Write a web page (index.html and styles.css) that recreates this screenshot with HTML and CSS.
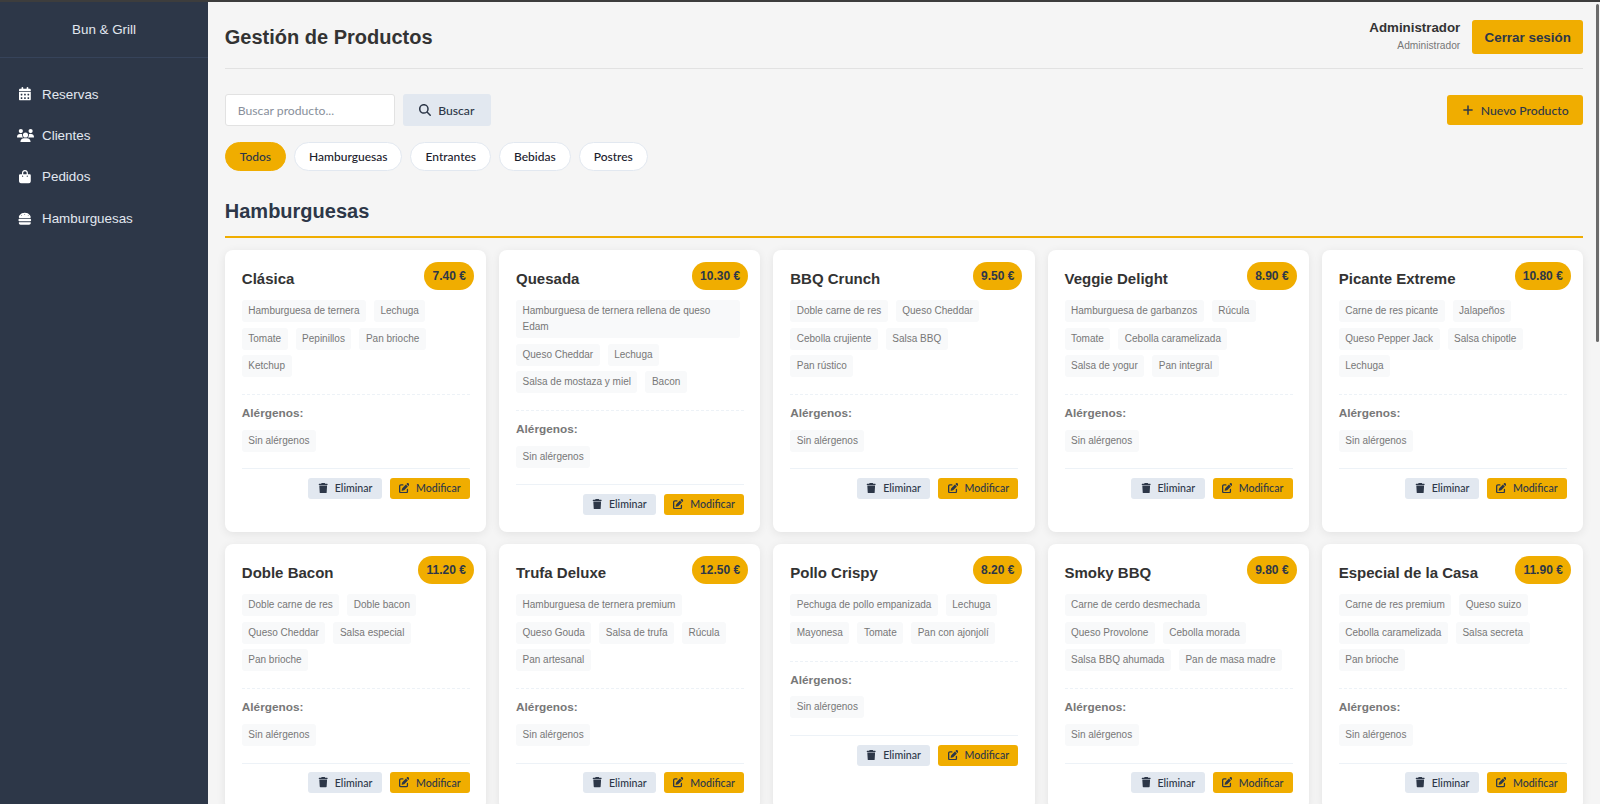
FILE: index.html
```html
<!DOCTYPE html>
<html lang="es">
<head>
    <meta charset="UTF-8">
    <title>Gestión de Productos</title>
    <link rel="stylesheet" href="styles.css">
</head>
<body>

<svg class="icon-defs" aria-hidden="true">
    <symbol id="i-calendar" viewBox="0 0 448 512"><path d="M128 0c17.7 0 32 14.3 32 32V64H288V32c0-17.7 14.3-32 32-32s32 14.3 32 32V64h48c26.5 0 48 21.5 48 48v48H0V112C0 85.5 21.5 64 48 64H96V32c0-17.7 14.3-32 32-32zM0 192H448V464c0 26.5-21.5 48-48 48H48c-26.5 0-48-21.5-48-48V192zm64 80v32c0 8.8 7.2 16 16 16h32c8.8 0 16-7.2 16-16V272c0-8.8-7.2-16-16-16H80c-8.8 0-16 7.2-16 16zm128 0v32c0 8.8 7.2 16 16 16h32c8.8 0 16-7.2 16-16V272c0-8.8-7.2-16-16-16H208c-8.8 0-16 7.2-16 16zm144-16c-8.8 0-16 7.2-16 16v32c0 8.8 7.2 16 16 16h32c8.8 0 16-7.2 16-16V272c0-8.8-7.2-16-16-16H336zM64 400v32c0 8.8 7.2 16 16 16h32c8.8 0 16-7.2 16-16V400c0-8.8-7.2-16-16-16H80c-8.8 0-16 7.2-16 16zm144-16c-8.8 0-16 7.2-16 16v32c0 8.8 7.2 16 16 16h32c8.8 0 16-7.2 16-16V400c0-8.8-7.2-16-16-16H208zm112 16v32c0 8.8 7.2 16 16 16h32c8.8 0 16-7.2 16-16V400c0-8.8-7.2-16-16-16H336c-8.8 0-16 7.2-16 16z"/></symbol>
    <symbol id="i-users" viewBox="0 0 640 512"><path d="M144 0a80 80 0 1 1 0 160A80 80 0 1 1 144 0zM512 0a80 80 0 1 1 0 160A80 80 0 1 1 512 0zM0 298.7C0 239.8 47.8 192 106.7 192h42.7c15.9 0 31 3.5 44.6 9.7c-1.3 7.2-1.9 14.7-1.9 22.3c0 38.2 16.8 72.5 43.3 96c-.2 0-.4 0-.7 0H21.3C9.6 320 0 310.4 0 298.7zM405.3 320c-.2 0-.4 0-.7 0c26.6-23.5 43.3-57.8 43.3-96c0-7.6-.7-15-1.9-22.3c13.6-6.3 28.7-9.7 44.6-9.7h42.7C592.2 192 640 239.8 640 298.7c0 11.8-9.6 21.3-21.3 21.3H405.3zM224 224a96 96 0 1 1 192 0 96 96 0 1 1 -192 0zM128 485.3C128 411.7 187.7 352 261.3 352H378.7C452.3 352 512 411.7 512 485.3c0 14.7-11.9 26.7-26.7 26.7H154.7c-14.7 0-26.7-11.9-26.7-26.7z"/></symbol>
    <symbol id="i-bag" viewBox="0 0 448 512"><path d="M160 112c0-35.3 28.7-64 64-64s64 28.7 64 64v48H160V112zm-48 48H48c-26.5 0-48 21.5-48 48V416c0 53 43 96 96 96H352c53 0 96-43 96-96V208c0-26.5-21.5-48-48-48H336V112C336 50.1 285.9 0 224 0S112 50.1 112 112v48zm24 48a24 24 0 1 1 0 48 24 24 0 1 1 0-48zm152 24a24 24 0 1 1 48 0 24 24 0 1 1 -48 0z"/></symbol>
    <symbol id="i-burger" viewBox="0 0 512 512"><path d="M61.1 224C45 224 32 211 32 194.9c0-1.9 .2-3.7 .6-5.6C37.9 168.3 78.8 32 256 32s218.1 136.3 223.4 157.3c.5 1.9 .6 3.7 .6 5.6c0 16.1-13 29.1-29.1 29.1H61.1zM144 128a16 16 0 1 0 -32 0 16 16 0 1 0 32 0zm240 16a16 16 0 1 0 0-32 16 16 0 1 0 0 32zM272 96a16 16 0 1 0 -32 0 16 16 0 1 0 32 0zM16 304c0-26.5 21.5-48 48-48H448c26.5 0 48 21.5 48 48s-21.5 48-48 48H64c-26.5 0-48-21.5-48-48zm16 96c0-8.8 7.2-16 16-16H464c8.8 0 16 7.2 16 16v16c0 35.3-28.7 64-64 64H96c-35.3 0-64-28.7-64-64V400z"/></symbol>
    <symbol id="i-search" viewBox="0 0 512 512"><path d="M416 208c0 45.9-14.9 88.3-40 122.7L502.6 457.4c12.5 12.5 12.5 32.8 0 45.3s-32.8 12.5-45.3 0L330.7 376c-34.4 25.2-76.8 40-122.7 40C93.1 416 0 322.9 0 208S93.1 0 208 0S416 93.1 416 208zM208 352a144 144 0 1 0 0-288 144 144 0 1 0 0 288z"/></symbol>
    <symbol id="i-plus" viewBox="0 0 448 512"><path d="M256 80c0-17.7-14.3-32-32-32s-32 14.3-32 32V224H48c-17.7 0-32 14.3-32 32s14.3 32 32 32H192V432c0 17.7 14.3 32 32 32s32-14.3 32-32V288H400c17.7 0 32-14.3 32-32s-14.3-32-32-32H256V80z"/></symbol>
    <symbol id="i-trash" viewBox="0 0 448 512"><path d="M135.2 17.7L128 32H32C14.3 32 0 46.3 0 64S14.3 96 32 96H416c17.7 0 32-14.3 32-32s-14.3-32-32-32H320l-7.2-14.3C307.4 6.8 296.3 0 284.2 0H163.8c-12.1 0-23.2 6.8-28.6 17.7zM416 128H32L53.2 467c1.6 25.3 22.6 45 47.9 45H346.9c25.3 0 46.3-19.7 47.9-45L416 128z"/></symbol>
    <symbol id="i-edit" viewBox="0 0 512 512"><path d="M471.6 21.7c-21.9-21.9-57.3-21.9-79.2 0L362.3 51.7l97.9 97.9 30.1-30.1c21.9-21.9 21.9-57.3 0-79.2L471.6 21.7zm-299.2 220c-6.1 6.1-10.8 13.6-13.5 21.9l-29.6 88.8c-2.9 8.6-.6 18.1 5.8 24.6s15.9 8.7 24.6 5.8l88.8-29.6c8.2-2.7 15.7-7.4 21.9-13.5L437.7 172.3 339.7 74.3 172.4 241.7zM96 64C43 64 0 107 0 160V416c0 53 43 96 96 96H352c53 0 96-43 96-96V320c0-17.7-14.3-32-32-32s-32 14.3-32 32v96c0 17.7-14.3 32-32 32H96c-17.7 0-32-14.3-32-32V160c0-17.7 14.3-32 32-32h96c17.7 0 32-14.3 32-32s-14.3-32-32-32H96z"/></symbol>
</svg>

<div class="app">

    <!--sidebar-->
    <aside class="sidebar">
        <div class="brand">Bun &amp; Grill</div>
        <nav class="side-nav">
            <a class="side-link"><span class="side-icon"><svg class="ic-cal"><use href="#i-calendar"/></svg></span>Reservas</a>
            <a class="side-link"><span class="side-icon"><svg class="ic-users"><use href="#i-users"/></svg></span>Clientes</a>
            <a class="side-link"><span class="side-icon"><svg class="ic-cal"><use href="#i-bag"/></svg></span>Pedidos</a>
            <a class="side-link"><span class="side-icon"><svg class="ic-burger"><use href="#i-burger"/></svg></span>Hamburguesas</a>
        </nav>
    </aside>

    <main class="content">

        <header class="top-bar">
            <h1 class="page-title">Gestión de Productos</h1>
            <div class="user-box">
                <div class="user-info">
                    <div class="user-name">Administrador</div>
                    <div class="user-role">Administrador</div>
                </div>
                <button class="btn-logout">Cerrar sesión</button>
            </div>
        </header>

        <div class="tools">
            <div class="search">
                <input class="search-input" type="text" placeholder="Buscar producto...">
                <button class="btn btn-search"><svg class="btn-ic"><use href="#i-search"/></svg>Buscar</button>
            </div>
            <button class="btn btn-new"><svg class="btn-ic"><use href="#i-plus"/></svg>Nuevo Producto</button>
        </div>

        <div class="chips">
            <button class="chip chip-on">Todos</button>
            <button class="chip">Hamburguesas</button>
            <button class="chip">Entrantes</button>
            <button class="chip">Bebidas</button>
            <button class="chip">Postres</button>
        </div>

        <h2 class="section-title">Hamburguesas</h2>

        <div class="grid">

            <article class="card">
                <div class="price">7.40 €</div>
                <h3 class="card-title">Clásica</h3>
                <div class="tags">
                    <span class="tag">Hamburguesa de ternera</span><span class="tag">Lechuga</span><span class="tag">Tomate</span><span class="tag">Pepinillos</span><span class="tag">Pan brioche</span><span class="tag">Ketchup</span>
                </div>
                <div class="allergens">
                    <div class="allergens-label">Alérgenos:</div>
                    <div class="tags"><span class="tag">Sin alérgenos</span></div>
                </div>
                <div class="actions">
                    <button class="mini mini-del"><svg class="mini-ic"><use href="#i-trash"/></svg>Eliminar</button>
                    <button class="mini mini-edit"><svg class="mini-ic"><use href="#i-edit"/></svg>Modificar</button>
                </div>
            </article>

            <article class="card">
                <div class="price">10.30 €</div>
                <h3 class="card-title">Quesada</h3>
                <div class="tags">
                    <span class="tag">Hamburguesa de ternera rellena de queso Edam</span><span class="tag">Queso Cheddar</span><span class="tag">Lechuga</span><span class="tag">Salsa de mostaza y miel</span><span class="tag">Bacon</span>
                </div>
                <div class="allergens">
                    <div class="allergens-label">Alérgenos:</div>
                    <div class="tags"><span class="tag">Sin alérgenos</span></div>
                </div>
                <div class="actions">
                    <button class="mini mini-del"><svg class="mini-ic"><use href="#i-trash"/></svg>Eliminar</button>
                    <button class="mini mini-edit"><svg class="mini-ic"><use href="#i-edit"/></svg>Modificar</button>
                </div>
            </article>

            <article class="card">
                <div class="price">9.50 €</div>
                <h3 class="card-title">BBQ Crunch</h3>
                <div class="tags">
                    <span class="tag">Doble carne de res</span><span class="tag">Queso Cheddar</span><span class="tag">Cebolla crujiente</span><span class="tag">Salsa BBQ</span><span class="tag">Pan rústico</span>
                </div>
                <div class="allergens">
                    <div class="allergens-label">Alérgenos:</div>
                    <div class="tags"><span class="tag">Sin alérgenos</span></div>
                </div>
                <div class="actions">
                    <button class="mini mini-del"><svg class="mini-ic"><use href="#i-trash"/></svg>Eliminar</button>
                    <button class="mini mini-edit"><svg class="mini-ic"><use href="#i-edit"/></svg>Modificar</button>
                </div>
            </article>

            <article class="card">
                <div class="price">8.90 €</div>
                <h3 class="card-title">Veggie Delight</h3>
                <div class="tags">
                    <span class="tag">Hamburguesa de garbanzos</span><span class="tag">Rúcula</span><span class="tag">Tomate</span><span class="tag">Cebolla caramelizada</span><span class="tag">Salsa de yogur</span><span class="tag">Pan integral</span>
                </div>
                <div class="allergens">
                    <div class="allergens-label">Alérgenos:</div>
                    <div class="tags"><span class="tag">Sin alérgenos</span></div>
                </div>
                <div class="actions">
                    <button class="mini mini-del"><svg class="mini-ic"><use href="#i-trash"/></svg>Eliminar</button>
                    <button class="mini mini-edit"><svg class="mini-ic"><use href="#i-edit"/></svg>Modificar</button>
                </div>
            </article>

            <article class="card">
                <div class="price">10.80 €</div>
                <h3 class="card-title">Picante Extreme</h3>
                <div class="tags">
                    <span class="tag">Carne de res picante</span><span class="tag">Jalapeños</span><span class="tag">Queso Pepper Jack</span><span class="tag">Salsa chipotle</span><span class="tag">Lechuga</span>
                </div>
                <div class="allergens">
                    <div class="allergens-label">Alérgenos:</div>
                    <div class="tags"><span class="tag">Sin alérgenos</span></div>
                </div>
                <div class="actions">
                    <button class="mini mini-del"><svg class="mini-ic"><use href="#i-trash"/></svg>Eliminar</button>
                    <button class="mini mini-edit"><svg class="mini-ic"><use href="#i-edit"/></svg>Modificar</button>
                </div>
            </article>

            <article class="card">
                <div class="price">11.20 €</div>
                <h3 class="card-title">Doble Bacon</h3>
                <div class="tags">
                    <span class="tag">Doble carne de res</span><span class="tag">Doble bacon</span><span class="tag">Queso Cheddar</span><span class="tag">Salsa especial</span><span class="tag">Pan brioche</span>
                </div>
                <div class="allergens">
                    <div class="allergens-label">Alérgenos:</div>
                    <div class="tags"><span class="tag">Sin alérgenos</span></div>
                </div>
                <div class="actions">
                    <button class="mini mini-del"><svg class="mini-ic"><use href="#i-trash"/></svg>Eliminar</button>
                    <button class="mini mini-edit"><svg class="mini-ic"><use href="#i-edit"/></svg>Modificar</button>
                </div>
            </article>

            <article class="card">
                <div class="price">12.50 €</div>
                <h3 class="card-title">Trufa Deluxe</h3>
                <div class="tags">
                    <span class="tag">Hamburguesa de ternera premium</span><span class="tag">Queso Gouda</span><span class="tag">Salsa de trufa</span><span class="tag">Rúcula</span><span class="tag">Pan artesanal</span>
                </div>
                <div class="allergens">
                    <div class="allergens-label">Alérgenos:</div>
                    <div class="tags"><span class="tag">Sin alérgenos</span></div>
                </div>
                <div class="actions">
                    <button class="mini mini-del"><svg class="mini-ic"><use href="#i-trash"/></svg>Eliminar</button>
                    <button class="mini mini-edit"><svg class="mini-ic"><use href="#i-edit"/></svg>Modificar</button>
                </div>
            </article>

            <article class="card">
                <div class="price">8.20 €</div>
                <h3 class="card-title">Pollo Crispy</h3>
                <div class="tags">
                    <span class="tag">Pechuga de pollo empanizada</span><span class="tag">Lechuga</span><span class="tag">Mayonesa</span><span class="tag">Tomate</span><span class="tag">Pan con ajonjolí</span>
                </div>
                <div class="allergens">
                    <div class="allergens-label">Alérgenos:</div>
                    <div class="tags"><span class="tag">Sin alérgenos</span></div>
                </div>
                <div class="actions">
                    <button class="mini mini-del"><svg class="mini-ic"><use href="#i-trash"/></svg>Eliminar</button>
                    <button class="mini mini-edit"><svg class="mini-ic"><use href="#i-edit"/></svg>Modificar</button>
                </div>
            </article>

            <article class="card">
                <div class="price">9.80 €</div>
                <h3 class="card-title">Smoky BBQ</h3>
                <div class="tags">
                    <span class="tag">Carne de cerdo desmechada</span><span class="tag">Queso Provolone</span><span class="tag">Cebolla morada</span><span class="tag">Salsa BBQ ahumada</span><span class="tag">Pan de masa madre</span>
                </div>
                <div class="allergens">
                    <div class="allergens-label">Alérgenos:</div>
                    <div class="tags"><span class="tag">Sin alérgenos</span></div>
                </div>
                <div class="actions">
                    <button class="mini mini-del"><svg class="mini-ic"><use href="#i-trash"/></svg>Eliminar</button>
                    <button class="mini mini-edit"><svg class="mini-ic"><use href="#i-edit"/></svg>Modificar</button>
                </div>
            </article>

            <article class="card">
                <div class="price">11.90 €</div>
                <h3 class="card-title">Especial de la Casa</h3>
                <div class="tags">
                    <span class="tag">Carne de res premium</span><span class="tag">Queso suizo</span><span class="tag">Cebolla caramelizada</span><span class="tag">Salsa secreta</span><span class="tag">Pan brioche</span>
                </div>
                <div class="allergens">
                    <div class="allergens-label">Alérgenos:</div>
                    <div class="tags"><span class="tag">Sin alérgenos</span></div>
                </div>
                <div class="actions">
                    <button class="mini mini-del"><svg class="mini-ic"><use href="#i-trash"/></svg>Eliminar</button>
                    <button class="mini mini-edit"><svg class="mini-ic"><use href="#i-edit"/></svg>Modificar</button>
                </div>
            </article>

        </div>
    </main>
</div>

<!--the window scrollbar-->
<div class="scroll-thumb"></div>

</body>
</html>
```

FILE: styles.css
```css
* {
    margin: 0;
    padding: 0;
    box-sizing: border-box;
}

html, body {
    height: 100%;
    overflow: hidden;
}

body {
    font-family: "Liberation Sans", Arial, sans-serif;
    color: #333;
    background-color: #f5f5f5;
    border-top: 2px solid #3d3d3d;
}

.icon-defs {
    display: none;
}

.app {
    display: flex;
    height: 100%;
}

/*sidebar*/
.sidebar {
    flex: 0 0 208px;
    background-color: #2d3748;
    color: #e2e8f0;
}

.brand {
    height: 56px;
    padding-top: 18.5px;
    text-align: center;
    font-size: 13.4px;
    line-height: 17px;
    border-bottom: 1px solid #36435a;
}

.side-nav {
    padding-top: 15.5px;
}

.side-link {
    display: flex;
    align-items: center;
    height: 41.4px;
    padding-left: 15px;
    font-size: 13.4px;
    color: #e2e8f0;
}

.side-icon {
    flex: 0 0 20px;
    display: flex;
    align-items: center;
    justify-content: center;
    margin-right: 7px;
}

.side-icon svg {
    fill: #fff;
    height: 13.6px;
}

.ic-cal {
    width: 11.9px;
}

.ic-users {
    width: 17px;
}

.ic-burger {
    width: 13.6px;
}

/*main*/
.content {
    flex: 1;
    min-width: 0;
    padding: 0 16.8px;
    overflow: hidden;
}

.top-bar {
    display: flex;
    justify-content: space-between;
    align-items: center;
    height: 67px;
    padding-top: 4px;
    border-bottom: 1px solid #e2e2e2;
}

.page-title {
    font-size: 20px;
    color: #333;
}

.user-box {
    display: flex;
    align-items: center;
    gap: 12px;
}

.user-info {
    text-align: right;
}

.user-name {
    font-size: 13.3px;
    font-weight: bold;
    line-height: 18px;
    color: #333;
}

.user-role {
    font-size: 10.2px;
    line-height: 18px;
    color: #777;
}

.btn-logout {
    width: 111px;
    height: 34px;
    border: 0;
    border-radius: 3px;
    background-color: #f0ad00;
    color: #2d3748;
    font-family: inherit;
    font-size: 13.4px;
    font-weight: bold;
}

.tools {
    display: flex;
    justify-content: space-between;
    align-items: center;
    margin-top: 25px;
}

.search {
    display: flex;
    gap: 8px;
}

.search-input {
    width: 170px;
    height: 32px;
    padding: 0 12px;
    border: 1px solid #e2e2e2;
    border-radius: 3px;
    background-color: #fff;
    font-family: Lato, "Noto Sans", sans-serif;
    font-size: 12.2px;
}

.search-input::placeholder {
    color: #888f9b;
}

.btn {
    display: flex;
    align-items: center;
    justify-content: center;
    gap: 7px;
    height: 32px;
    border: 0;
    border-radius: 3px;
    font-family: Lato, "Noto Sans", sans-serif;
    font-size: 12.2px;
    font-weight: 500;
    color: #2d3748;
}

.btn-ic {
    width: 12px;
    height: 12px;
    fill: #2d3748;
}

.btn-search {
    width: 88px;
    background-color: #e2e8f0;
}

.btn-new {
    width: 136px;
    height: 30px;
    background-color: #f0ad00;
}

.chips {
    display: flex;
    gap: 8px;
    margin-top: 16px;
}

.chip {
    height: 29px;
    padding: 0 14px;
    border: 1px solid #e2e8f0;
    border-radius: 15px;
    background-color: #fff;
    font-family: Lato, "Noto Sans", sans-serif;
    font-size: 12px;
    font-weight: 500;
    color: #1a202c;
}

.chip-on {
    border-color: #f0ad00;
    background-color: #f0ad00;
    color: #2d3748;
}

.section-title {
    margin-top: 28px;
    padding-bottom: 13px;
    border-bottom: 2px solid #f0ad00;
    font-size: 20px;
    line-height: 24px;
    color: #2d3748;
}

/*grid of cards*/
.grid {
    display: grid;
    grid-template-columns: repeat(5, 1fr);
    gap: 12.8px;
    margin-top: 12px;
}

.card {
    position: relative;
    padding: 17px 16.4px 17px 17px;
    border-radius: 8px;
    background-color: #fff;
    box-shadow: 0 2px 10px rgba(0, 0, 0, 0.08);
}

.card-title {
    font-size: 15px;
    line-height: 24px;
    color: #333;
    margin-bottom: 9px;
}

.price {
    position: absolute;
    top: 12px;
    right: 12.4px;
    height: 28px;
    padding: 0 8px;
    border-radius: 14px;
    background-color: #f0ad00;
    font-size: 12px;
    font-weight: bold;
    line-height: 28px;
    color: #2d3748;
}

.tags {
    display: flex;
    flex-wrap: wrap;
    gap: 5.5px 8px;
    padding-right: 4px;
}

.tag {
    padding: 3px 6.5px;
    border-radius: 3px;
    background-color: #f8f9fa;
    font-size: 10px;
    line-height: 16px;
    color: #777;
}

.allergens {
    margin-top: 17px;
    padding-top: 10px;
    border-top: 1px dashed #edf2f7;
}

.allergens-label {
    font-size: 11.8px;
    font-weight: bold;
    line-height: 16px;
    color: #777;
    margin-bottom: 8.5px;
}

.actions {
    display: flex;
    justify-content: flex-end;
    gap: 8px;
    margin-top: 16.7px;
    padding-top: 8.5px;
    border-top: 1px solid #edf2f7;
}

.mini {
    display: flex;
    align-items: center;
    justify-content: center;
    gap: 6.5px;
    height: 21px;
    border: 0;
    border-radius: 3px;
    font-family: Lato, "Noto Sans", sans-serif;
    font-size: 10.6px;
    font-weight: 500;
    color: #2d3748;
}

.mini-ic {
    width: 10.4px;
    height: 10.4px;
    fill: #2d3748;
}

.mini-del {
    width: 73.4px;
    background-color: #e2e8f0;
}

.mini-edit {
    width: 80px;
    background-color: #f0ad00;
}

/*scrollbar thumb at the window edge*/
.scroll-thumb {
    position: fixed;
    top: 4px;
    right: 1px;
    width: 3px;
    height: 338px;
    border-radius: 2px;
    background-color: #6b6b6b;
}
```
